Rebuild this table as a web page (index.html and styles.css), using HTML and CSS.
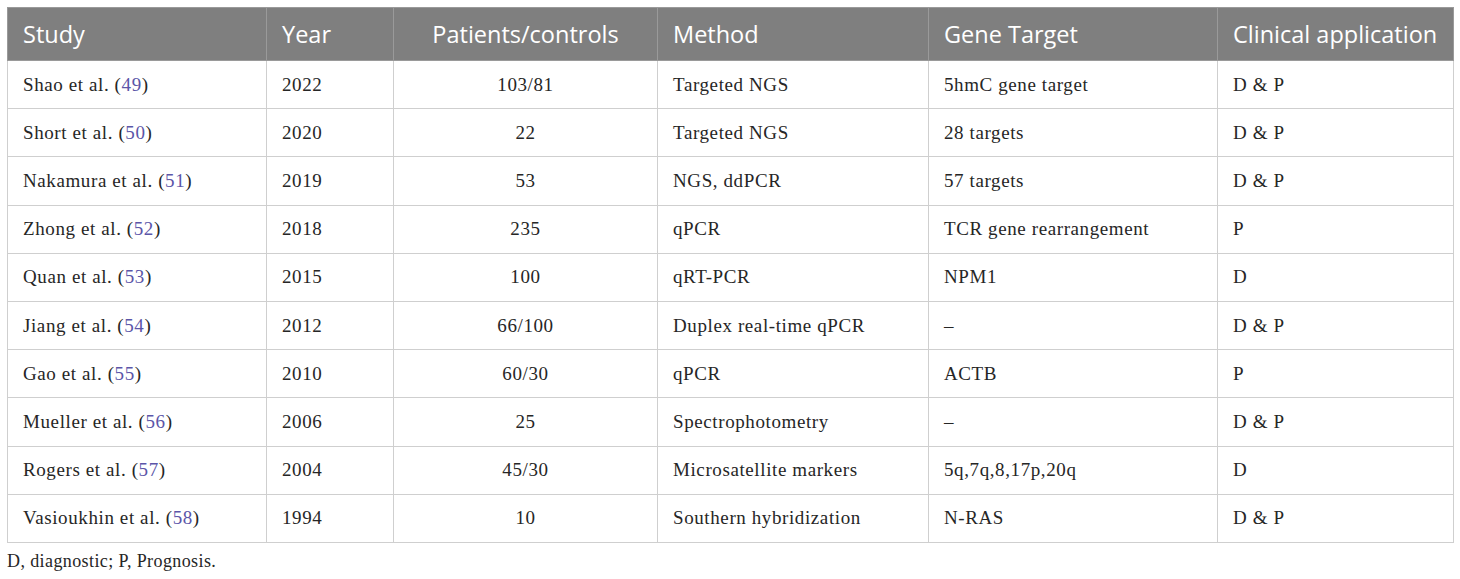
FILE: index.html
```html
<!DOCTYPE html>
<html lang="en">
<head>
    <meta charset="UTF-8">
    <meta name="viewport" content="width=device-width, initial-scale=1.0">
    <title>Circulating DNA studies</title>
    <link rel="stylesheet" href="styles.css">
</head>
<body>
    <div class="table-wrap">
        <table class="data-table">
            <colgroup>
                <col class="c-study">
                <col class="c-year">
                <col class="c-patients">
                <col class="c-method">
                <col class="c-gene">
                <col class="c-clinical">
            </colgroup>
            <thead>
                <tr>
                    <th>Study</th>
                    <th>Year</th>
                    <th class="center">Patients/controls</th>
                    <th>Method</th>
                    <th>Gene Target</th>
                    <th>Clinical application</th>
                </tr>
            </thead>
            <tbody>
                <tr>
                    <td>Shao et al. (<a class="ref">49</a>)</td>
                    <td>2022</td>
                    <td class="center">103/81</td>
                    <td>Targeted NGS</td>
                    <td>5hmC gene target</td>
                    <td>D &amp; P</td>
                </tr>
                <tr>
                    <td>Short et al. (<a class="ref">50</a>)</td>
                    <td>2020</td>
                    <td class="center">22</td>
                    <td>Targeted NGS</td>
                    <td>28 targets</td>
                    <td>D &amp; P</td>
                </tr>
                <tr>
                    <td>Nakamura et al. (<a class="ref">51</a>)</td>
                    <td>2019</td>
                    <td class="center">53</td>
                    <td>NGS, ddPCR</td>
                    <td>57 targets</td>
                    <td>D &amp; P</td>
                </tr>
                <tr>
                    <td>Zhong et al. (<a class="ref">52</a>)</td>
                    <td>2018</td>
                    <td class="center">235</td>
                    <td>qPCR</td>
                    <td>TCR gene rearrangement</td>
                    <td>P</td>
                </tr>
                <tr>
                    <td>Quan et al. (<a class="ref">53</a>)</td>
                    <td>2015</td>
                    <td class="center">100</td>
                    <td>qRT-PCR</td>
                    <td>NPM1</td>
                    <td>D</td>
                </tr>
                <tr>
                    <td>Jiang et al. (<a class="ref">54</a>)</td>
                    <td>2012</td>
                    <td class="center">66/100</td>
                    <td>Duplex real-time qPCR</td>
                    <td>–</td>
                    <td>D &amp; P</td>
                </tr>
                <tr>
                    <td>Gao et al. (<a class="ref">55</a>)</td>
                    <td>2010</td>
                    <td class="center">60/30</td>
                    <td>qPCR</td>
                    <td>ACTB</td>
                    <td>P</td>
                </tr>
                <tr>
                    <td>Mueller et al. (<a class="ref">56</a>)</td>
                    <td>2006</td>
                    <td class="center">25</td>
                    <td>Spectrophotometry</td>
                    <td>–</td>
                    <td>D &amp; P</td>
                </tr>
                <tr>
                    <td>Rogers et al. (<a class="ref">57</a>)</td>
                    <td>2004</td>
                    <td class="center">45/30</td>
                    <td>Microsatellite markers</td>
                    <td>5q,7q,8,17p,20q</td>
                    <td>D</td>
                </tr>
                <tr>
                    <td>Vasioukhin et al. (<a class="ref">58</a>)</td>
                    <td>1994</td>
                    <td class="center">10</td>
                    <td>Southern hybridization</td>
                    <td>N-RAS</td>
                    <td>D &amp; P</td>
                </tr>
            </tbody>
        </table>
        <p class="footnote">D, diagnostic; P, Prognosis.</p>
    </div>
</body>
</html>
```

FILE: styles.css
```css
body {
    margin: 0;
    background: #ffffff;
    font-family: "Liberation Serif", "DejaVu Serif", serif;
    color: #262626;
}

.table-wrap {
    padding: 7px;
}

.data-table {
    width: 1446px;
    border-collapse: collapse;
    table-layout: fixed;
}

.c-study { width: 259px; }
.c-year { width: 127px; }
.c-patients { width: 264px; }
.c-method { width: 271px; }
.c-gene { width: 289px; }
.c-clinical { width: 236px; }

th, td {
    border: 1px solid #cfcfcf;
    padding: 0 15px;
    text-align: left;
    white-space: nowrap;
}

th {
    background: #7f7f7f;
    color: #ffffff;
    font-family: "Open Sans", "Liberation Sans", sans-serif;
    font-weight: normal;
    font-size: 23.5px;
    height: 52px;
    border-color: #9a9a9a;
}

td {
    font-size: 19px;
    letter-spacing: 0.6px;
    height: 47.2px;
}

.center {
    text-align: center;
}

.ref {
    color: #5b55a8;
}

.footnote {
    margin: 8px 0 0;
    font-size: 18px;
    letter-spacing: 0.4px;
}
```
